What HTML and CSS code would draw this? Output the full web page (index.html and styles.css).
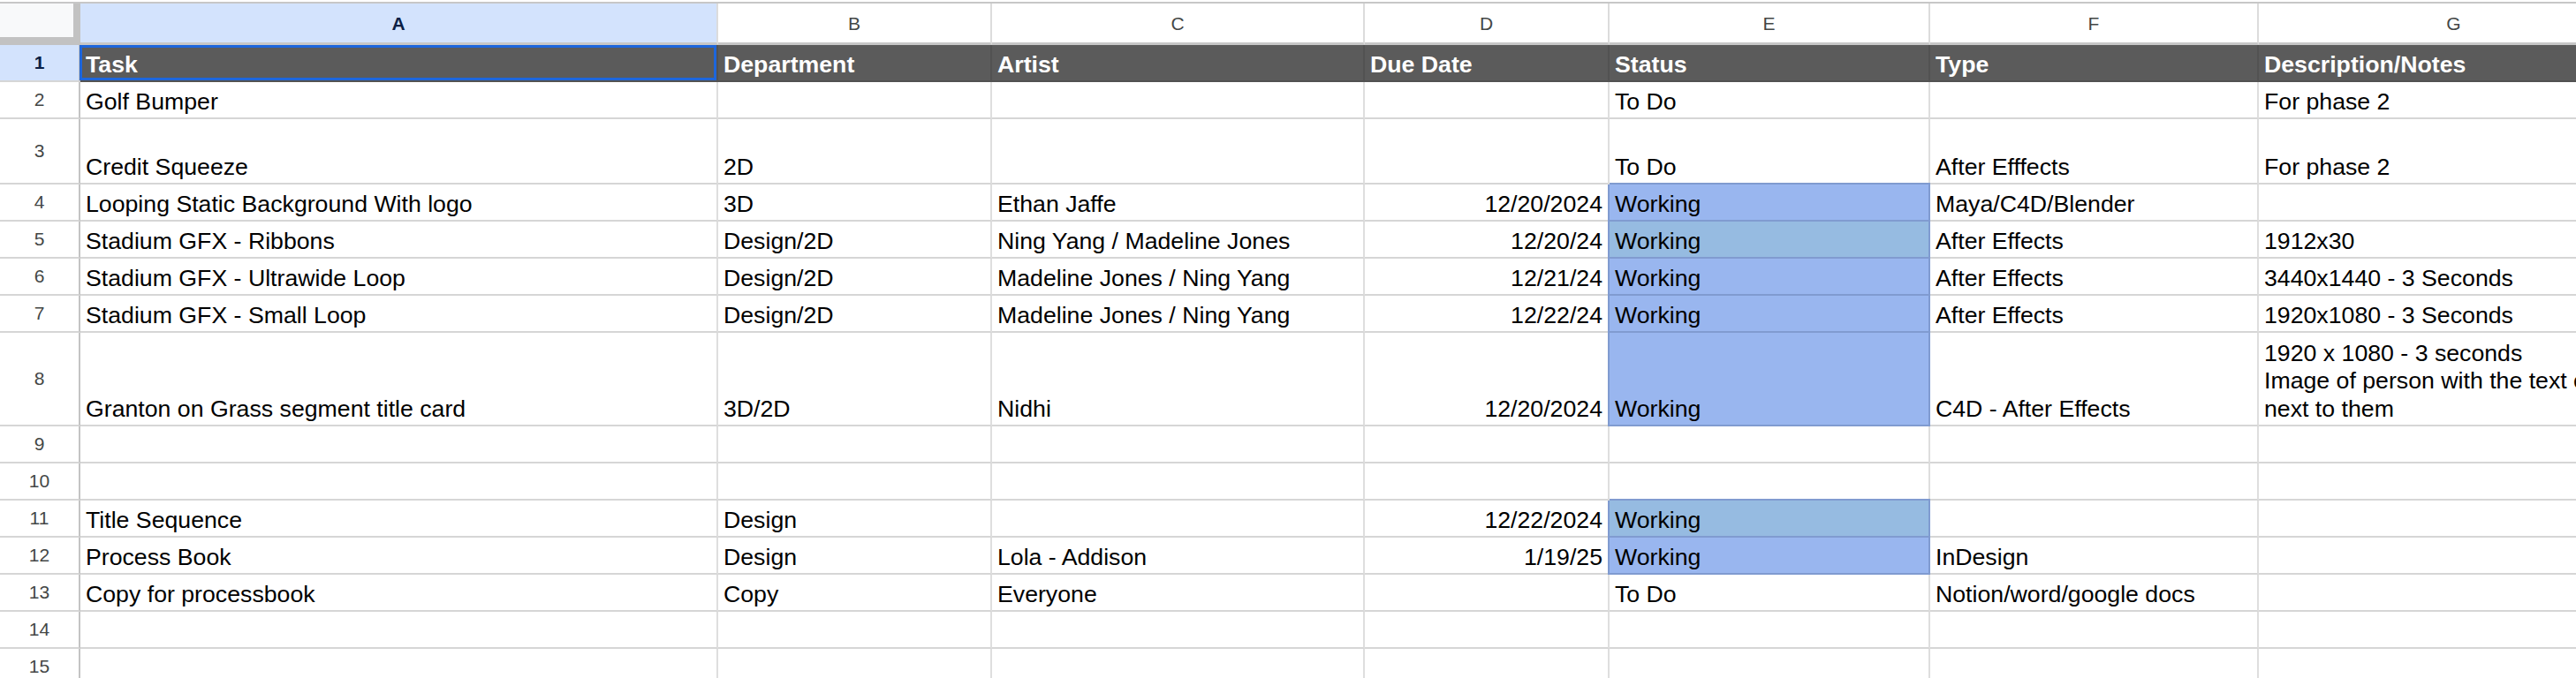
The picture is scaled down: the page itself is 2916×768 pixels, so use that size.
FILE: index.html
```html
<!DOCTYPE html>
<html lang="en">
<head>
    <meta charset="UTF-8">
    <title>Motion tasks</title>
    <link rel="stylesheet" href="styles.css">
</head>
<body>
    <div class="sheet">
        <!-- column letters -->
        <div class="row col-heads">
            <div class="corner"></div>
            <div class="colhead active">A</div>
            <div class="colhead">B</div>
            <div class="colhead">C</div>
            <div class="colhead">D</div>
            <div class="colhead">E</div>
            <div class="colhead">F</div>
            <div class="colhead">G</div>
        </div>

        <div class="row head-row">
            <div class="rownum active">1</div>
            <div class="cell selected">Task</div>
            <div class="cell">Department</div>
            <div class="cell">Artist</div>
            <div class="cell">Due Date</div>
            <div class="cell">Status</div>
            <div class="cell">Type</div>
            <div class="cell">Description/Notes</div>
        </div>

        <div class="row">
            <div class="rownum">2</div>
            <div class="cell">Golf Bumper</div>
            <div class="cell"></div>
            <div class="cell"></div>
            <div class="cell date"></div>
            <div class="cell">To Do</div>
            <div class="cell"></div>
            <div class="cell">For phase 2</div>
        </div>

        <div class="row tall">
            <div class="rownum">3</div>
            <div class="cell">Credit Squeeze</div>
            <div class="cell">2D</div>
            <div class="cell"></div>
            <div class="cell date"></div>
            <div class="cell">To Do</div>
            <div class="cell">After Efffects</div>
            <div class="cell">For phase 2</div>
        </div>

        <div class="row">
            <div class="rownum">4</div>
            <div class="cell">Looping Static Background With logo</div>
            <div class="cell">3D</div>
            <div class="cell">Ethan Jaffe</div>
            <div class="cell date">12/20/2024</div>
            <div class="cell working">Working</div>
            <div class="cell">Maya/C4D/Blender</div>
            <div class="cell"></div>
        </div>

        <div class="row">
            <div class="rownum">5</div>
            <div class="cell">Stadium GFX - Ribbons</div>
            <div class="cell">Design/2D</div>
            <div class="cell">Ning Yang / Madeline Jones</div>
            <div class="cell date">12/20/24</div>
            <div class="cell working alt">Working</div>
            <div class="cell">After Effects</div>
            <div class="cell">1912x30</div>
        </div>

        <div class="row">
            <div class="rownum">6</div>
            <div class="cell">Stadium GFX - Ultrawide Loop</div>
            <div class="cell">Design/2D</div>
            <div class="cell">Madeline Jones / Ning Yang</div>
            <div class="cell date">12/21/24</div>
            <div class="cell working">Working</div>
            <div class="cell">After Effects</div>
            <div class="cell">3440x1440 - 3 Seconds</div>
        </div>

        <div class="row">
            <div class="rownum">7</div>
            <div class="cell">Stadium GFX - Small Loop</div>
            <div class="cell">Design/2D</div>
            <div class="cell">Madeline Jones / Ning Yang</div>
            <div class="cell date">12/22/24</div>
            <div class="cell working">Working</div>
            <div class="cell">After Effects</div>
            <div class="cell">1920x1080 - 3 Seconds</div>
        </div>

        <div class="row taller">
            <div class="rownum">8</div>
            <div class="cell">Granton on Grass segment title card</div>
            <div class="cell">3D/2D</div>
            <div class="cell">Nidhi</div>
            <div class="cell date">12/20/2024</div>
            <div class="cell working">Working</div>
            <div class="cell">C4D - After Effects</div>
            <div class="cell wrap">1920 x 1080 - 3 seconds<br>Image of person with the text on<br>next to them</div>
        </div>

        <div class="row">
            <div class="rownum">9</div>
            <div class="cell"></div><div class="cell"></div><div class="cell"></div><div class="cell"></div>
            <div class="cell"></div><div class="cell"></div><div class="cell"></div>
        </div>

        <div class="row">
            <div class="rownum">10</div>
            <div class="cell"></div><div class="cell"></div><div class="cell"></div><div class="cell"></div>
            <div class="cell"></div><div class="cell"></div><div class="cell"></div>
        </div>

        <div class="row">
            <div class="rownum">11</div>
            <div class="cell">Title Sequence</div>
            <div class="cell">Design</div>
            <div class="cell"></div>
            <div class="cell date">12/22/2024</div>
            <div class="cell working alt">Working</div>
            <div class="cell"></div>
            <div class="cell"></div>
        </div>

        <div class="row">
            <div class="rownum">12</div>
            <div class="cell">Process Book</div>
            <div class="cell">Design</div>
            <div class="cell">Lola - Addison</div>
            <div class="cell date">1/19/25</div>
            <div class="cell working">Working</div>
            <div class="cell">InDesign</div>
            <div class="cell"></div>
        </div>

        <div class="row">
            <div class="rownum">13</div>
            <div class="cell">Copy for processbook</div>
            <div class="cell">Copy</div>
            <div class="cell">Everyone</div>
            <div class="cell date"></div>
            <div class="cell">To Do</div>
            <div class="cell">Notion/word/google docs</div>
            <div class="cell"></div>
        </div>

        <div class="row">
            <div class="rownum">14</div>
            <div class="cell"></div><div class="cell"></div><div class="cell"></div><div class="cell"></div>
            <div class="cell"></div><div class="cell"></div><div class="cell"></div>
        </div>

        <div class="row">
            <div class="rownum">15</div>
            <div class="cell"></div><div class="cell"></div><div class="cell"></div><div class="cell"></div>
            <div class="cell"></div><div class="cell"></div><div class="cell"></div>
        </div>
    </div>
</body>
</html>
```

FILE: styles.css
```css
* { box-sizing: border-box; }

body {
    margin: 0;
    background: #fff;
    overflow: hidden;
    font-family: "Liberation Sans", Arial, sans-serif;
}

.sheet {
    margin-top: 2px;
    border-top: 2px solid #c7c7c7;
    width: 3000px;
}

.row {
    display: grid;
    grid-template-columns: 91px 722px 310px 422px 277px 363px 372px 443px;
    height: 42px;
}
.row.tall { height: 74px; }
.row.taller { height: 106px; }

/* column letters */
.col-heads { height: 47px; }
.corner {
    background: #f8f9fa;
    border-right: 8px solid #c2c2c2;
    border-bottom: 9px solid #c2c2c2;
}
.colhead {
    display: flex;
    align-items: center;
    justify-content: center;
    padding-top: 2px;
    font-size: 21px;
    color: #444746;
    border-right: 2px solid #dcdcdc;
    border-bottom: 3px solid #c7c7c7;
}
.colhead.active {
    background: #d3e3fd;
    color: #0b1f45;
    font-weight: bold;
}

/* row numbers */
.rownum {
    display: flex;
    align-items: center;
    justify-content: center;
    font-size: 21px;
    color: #444746;
    border-right: 2px solid #c4c4c4;
    border-bottom: 2px solid #d6d6d6;
}
.rownum.active {
    background: #d3e3fd;
    color: #0b1f45;
    font-weight: bold;
}

.cell {
    display: flex;
    align-items: flex-end;
    padding: 0 6px 3px 6px;
    font-size: 26.7px;
    line-height: 30px;
    color: #000;
    white-space: nowrap;
    border-right: 2px solid #dedede;
    border-bottom: 2px solid #d6d6d6;
}
.cell.date { justify-content: flex-end; }

.cell.working {
    background: #99b6ef;
    border-color: #809bd0;
    box-shadow: -2px 0 0 #809bd0, 0 -2px 0 #809bd0;
}
.cell.working.alt { background: #96bbe1; }

.cell.wrap {
    line-height: 31.5px;
    padding-bottom: 2px;
}

/* header line of the table */
.head-row .cell {
    background: #5b5b5b;
    color: #fff;
    font-weight: bold;
    border-color: #525252;
}
.cell.selected { position: relative; }
.cell.selected::after {
    content: "";
    position: absolute;
    top: 0;
    right: 0;
    bottom: 0;
    left: -1px;
    border: 3px solid #1d66dc;
}
```
